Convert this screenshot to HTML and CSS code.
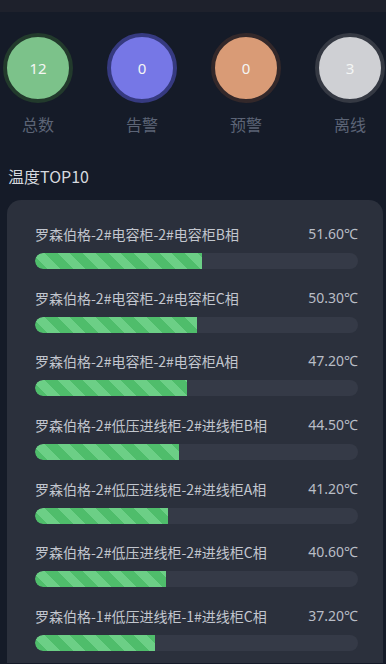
FILE: index.html
```html
<!DOCTYPE html>
<html lang="zh-CN">
<head>
    <meta charset="UTF-8">
    <meta name="viewport" content="width=device-width, initial-scale=1.0">
    <title>温度监测</title>
    <link rel="stylesheet" href="styles.css">
</head>
<body>
    <div class="top-strip"></div>

    <div class="stats">
        <div class="stat">
            <div class="circle green"><span>12</span></div>
            <div class="stat-label">总数</div>
        </div>
        <div class="stat">
            <div class="circle blue"><span>0</span></div>
            <div class="stat-label">告警</div>
        </div>
        <div class="stat">
            <div class="circle orange"><span>0</span></div>
            <div class="stat-label">预警</div>
        </div>
        <div class="stat">
            <div class="circle grey"><span>3</span></div>
            <div class="stat-label">离线</div>
        </div>
    </div>

    <div class="section-title">温度TOP10</div>

    <div class="card">
        <div class="row">
            <div class="row-head"><span>罗森伯格-2#电容柜-2#电容柜B相</span><span class="temp">51.60℃</span></div>
            <div class="track"><div class="fill" style="width: 51.6%"></div></div>
        </div>
        <div class="row">
            <div class="row-head"><span>罗森伯格-2#电容柜-2#电容柜C相</span><span class="temp">50.30℃</span></div>
            <div class="track"><div class="fill" style="width: 50.3%"></div></div>
        </div>
        <div class="row">
            <div class="row-head"><span>罗森伯格-2#电容柜-2#电容柜A相</span><span class="temp">47.20℃</span></div>
            <div class="track"><div class="fill" style="width: 47.2%"></div></div>
        </div>
        <div class="row">
            <div class="row-head"><span>罗森伯格-2#低压进线柜-2#进线柜B相</span><span class="temp">44.50℃</span></div>
            <div class="track"><div class="fill" style="width: 44.5%"></div></div>
        </div>
        <div class="row">
            <div class="row-head"><span>罗森伯格-2#低压进线柜-2#进线柜A相</span><span class="temp">41.20℃</span></div>
            <div class="track"><div class="fill" style="width: 41.2%"></div></div>
        </div>
        <div class="row">
            <div class="row-head"><span>罗森伯格-2#低压进线柜-2#进线柜C相</span><span class="temp">40.60℃</span></div>
            <div class="track"><div class="fill" style="width: 40.6%"></div></div>
        </div>
        <div class="row">
            <div class="row-head"><span>罗森伯格-1#低压进线柜-1#进线柜C相</span><span class="temp">37.20℃</span></div>
            <div class="track"><div class="fill" style="width: 37.2%"></div></div>
        </div>
    </div>
</body>
</html>
```

FILE: styles.css
```css
body {
    margin: 0;
    background: #151b28;
    font-family: "Noto Sans CJK SC", "Noto Sans", sans-serif;
    color: #d3d6dc;
    overflow: hidden;
    height: 664px;
}

.top-strip {
    height: 12px;
    background: #1e212c;
}

.stats {
    display: flex;
    gap: 34px;
    margin-top: 21px;
    padding-left: 3px;
}

.stat {
    width: 70px;
    flex: none;
    display: flex;
    flex-direction: column;
    align-items: center;
}

.circle {
    width: 62px;
    height: 62px;
    border-radius: 50%;
    border: 4px solid;
    display: flex;
    align-items: center;
    justify-content: center;
    color: #f4f6f4;
    font-family: "Noto Sans", sans-serif;
    font-size: 15px;
}

.circle.green {
    background: #7cc28a;
    border-color: #223a2c;
}

.circle.blue {
    background: #7677e6;
    border-color: #363a80;
}

.circle.orange {
    background: #d99b76;
    border-color: #33282a;
}

.circle.grey {
    background: #cfd0d4;
    border-color: #353943;
}

.stat-label {
    margin-top: 10px;
    font-size: 16px;
    line-height: 22px;
    color: #5c6476;
}

.section-title {
    margin: 30px 0 0 8px;
    font-size: 16px;
    line-height: 22px;
    color: #d6d9df;
}

.card {
    margin: 13px 3px 0 7px;
    padding: 24px 25px 0 28px;
    background: #2b303c;
    border-radius: 14px 14px 0 0;
    height: 439px;
    overflow: hidden;
}

.row {
    height: 63.7px;
}

.row-head {
    display: flex;
    justify-content: space-between;
    font-size: 14px;
    line-height: 20px;
    color: #c2c6ce;
}

.temp {
    color: #b9bdc6;
    font-family: "Noto Sans", sans-serif;
}

.track {
    margin-top: 9px;
    height: 16px;
    border-radius: 8px;
    background: #353a47;
    overflow: hidden;
}

.fill {
    height: 100%;
    border-radius: 8px 0 0 8px;
    background: repeating-linear-gradient(45deg, #4fbd6b 0 9px, #6ccf86 9px 18px);
}
```
